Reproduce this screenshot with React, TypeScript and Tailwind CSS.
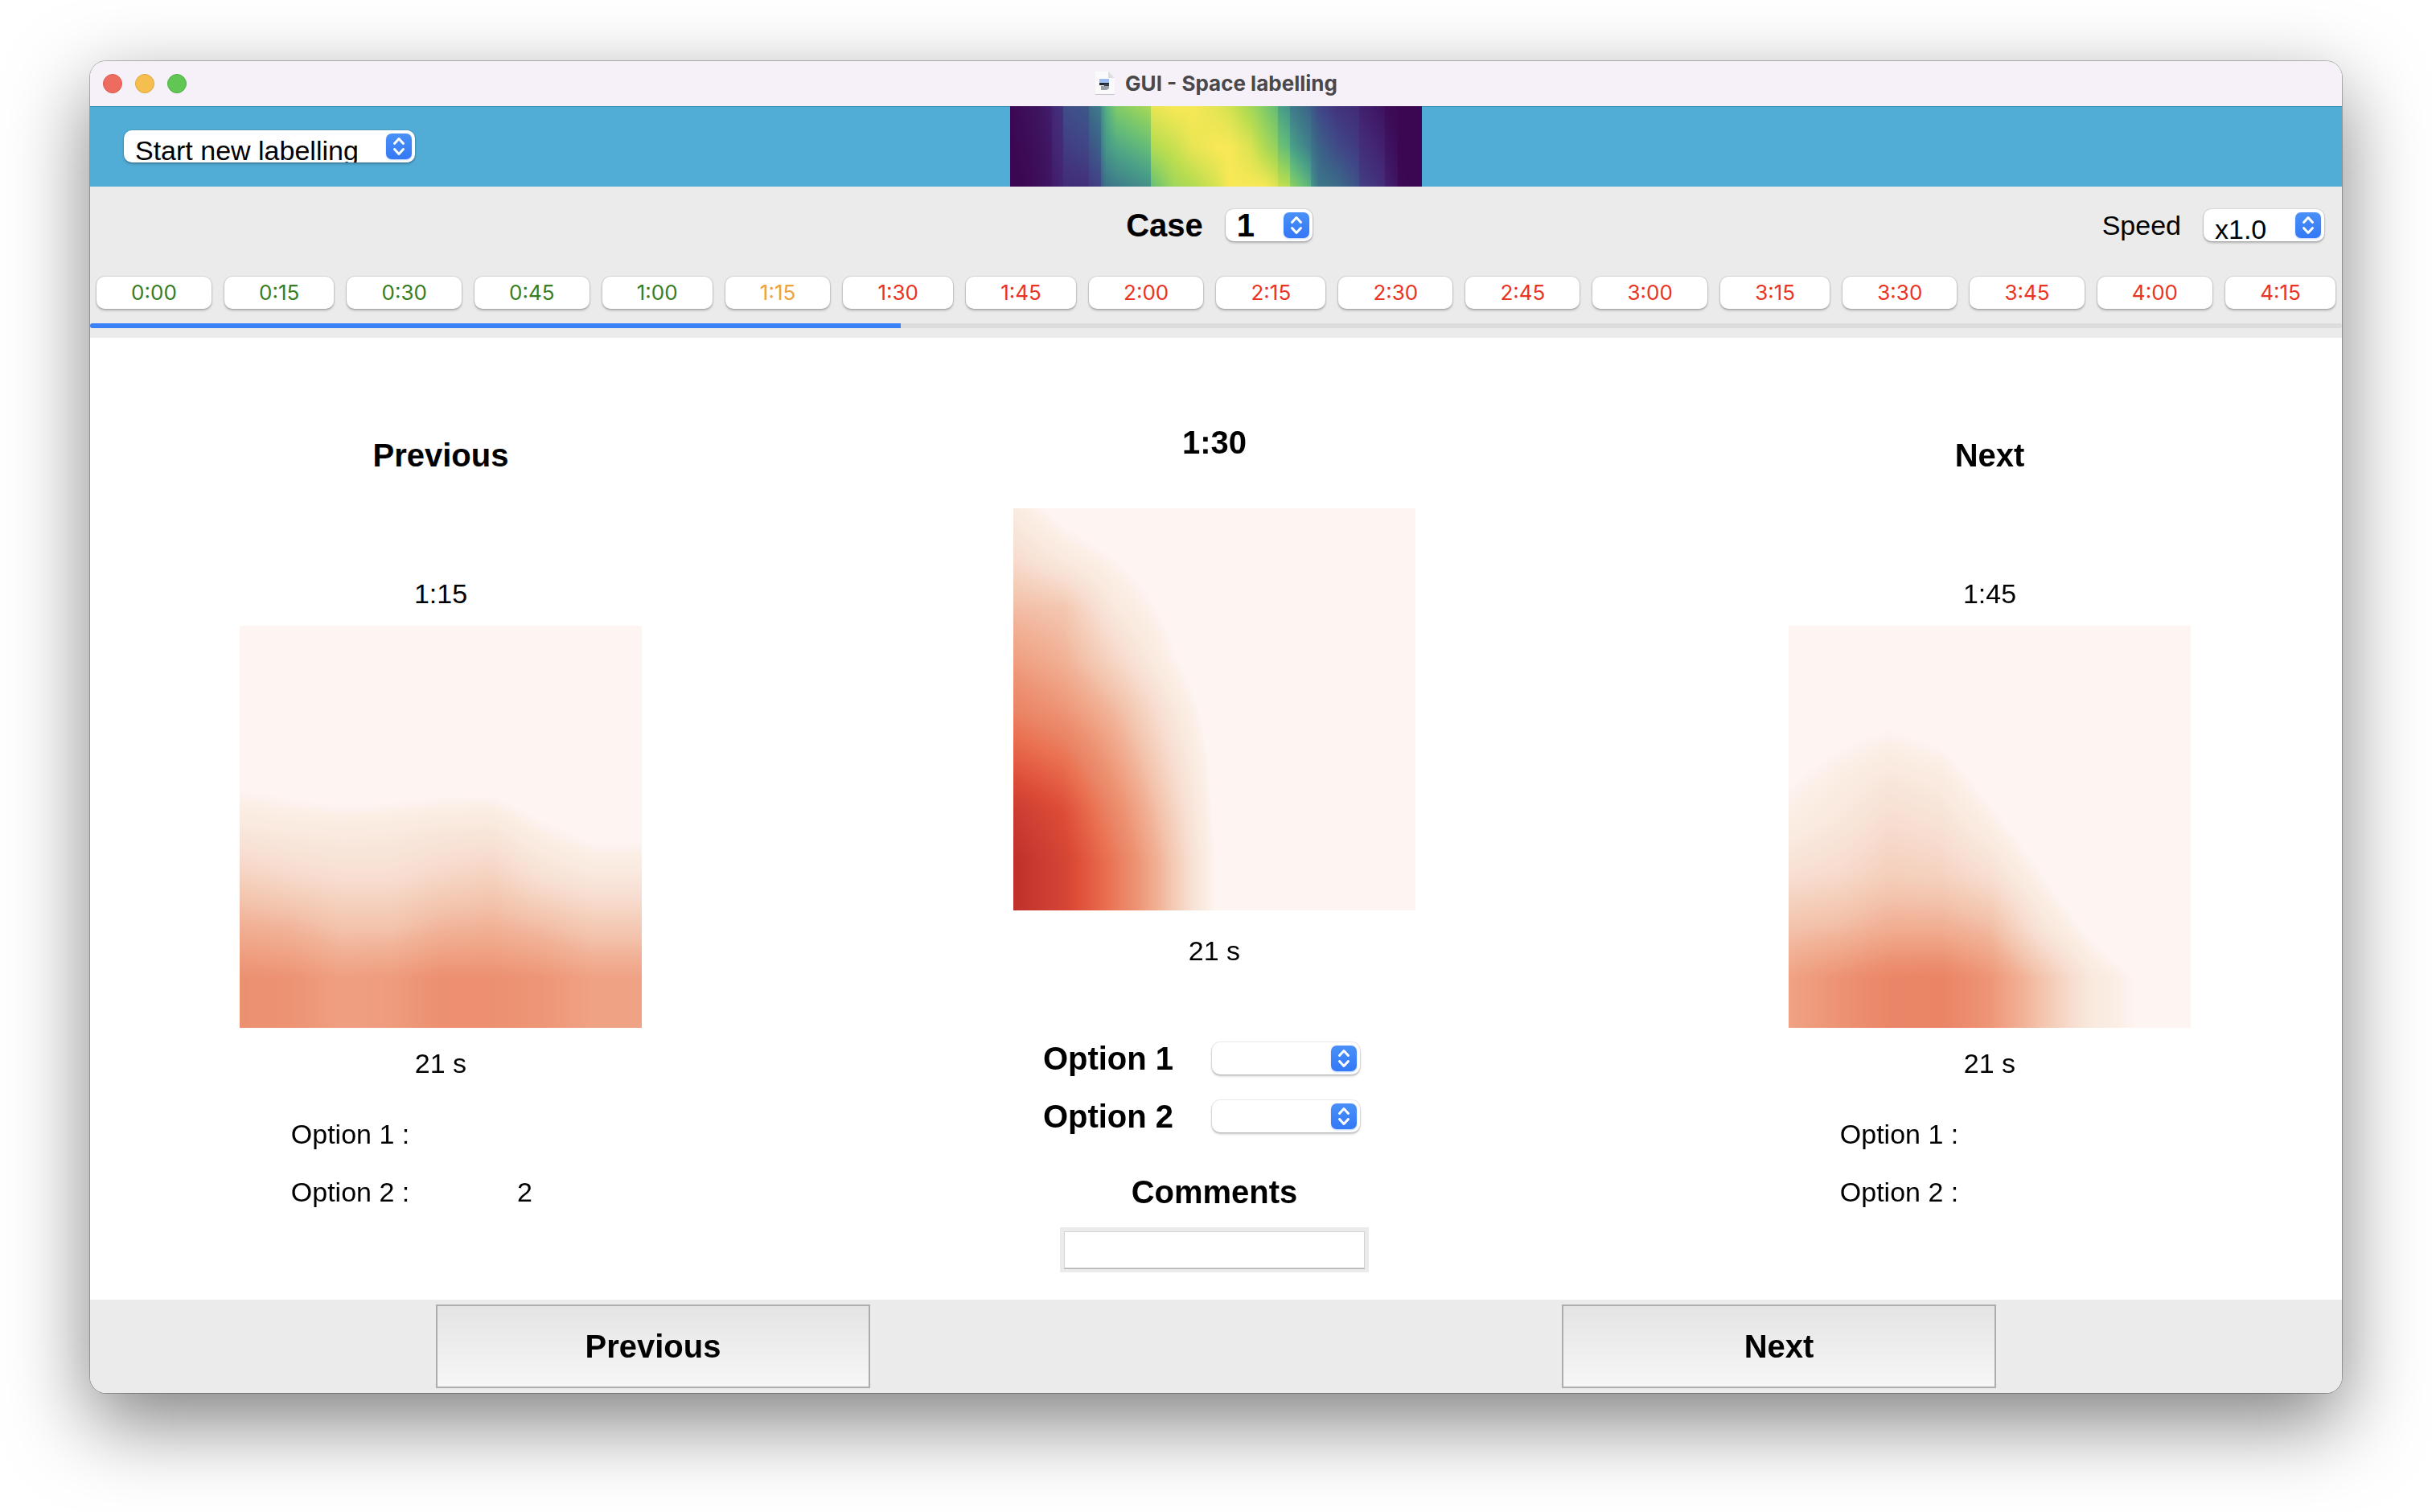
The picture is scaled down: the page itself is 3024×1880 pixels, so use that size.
import { useEffect, useRef, useState } from "react";

type RGB = [number, number, number];
type Stop = [number, RGB];

const hex = (h: string): RGB => [
  parseInt(h.slice(0, 2), 16),
  parseInt(h.slice(2, 4), 16),
  parseInt(h.slice(4, 6), 16),
];

const REDS: Stop[] = [
  [0, hex("fef4f1")],
  [0.012, hex("fcf1ed")],
  [0.03, hex("fbeee4")],
  [0.06, hex("faeadf")],
  [0.09, hex("f8e4d8")],
  [0.12, hex("f8ded2")],
  [0.17, hex("f5d1be")],
  [0.22, hex("f3c3ac")],
  [0.27, hex("f1b196")],
  [0.32, hex("f0a284")],
  [0.38, hex("ec9070")],
  [0.43, hex("ea8465")],
  [0.49, hex("ea7252")],
  [0.56, hex("e35c43")],
  [0.62, hex("dc4b36")],
  [0.7, hex("cd3d32")],
  [0.77, hex("bf302a")],
];

const VIRIDIS: Stop[] = [
  [0, hex("3b0652")],
  [0.11, hex("432775")],
  [0.22, hex("404787")],
  [0.33, hex("3b6588")],
  [0.44, hex("40818a")],
  [0.55, hex("4aa087")],
  [0.66, hex("65bc78")],
  [0.77, hex("8ccf62")],
  [0.88, hex("badd50")],
  [1, hex("f8e855")],
];

function colour(map: Stop[], v: number): RGB {
  if (v <= map[0][0]) return map[0][1];
  for (let i = 1; i < map.length; i++) {
    const [b, cb] = map[i];
    const [a, ca] = map[i - 1];
    if (v <= b) {
      const f = (v - a) / (b - a);
      return [0, 1, 2].map((k) => ca[k] + (cb[k] - ca[k]) * f) as RGB;
    }
  }
  return map[map.length - 1][1];
}

// Eight samples per axis, spaced an eighth apart; values below zero are blank.
const N = -0.1;
const PREVIOUS_MAP = [
  [N, N, N, N, N, N, N, N],
  [N, N, N, N, N, N, N, N],
  [N, N, N, N, N, N, N, N],
  [-0.022, -0.038, -0.06, -0.055, -0.043, -0.043, -0.09, N],
  [0.07, 0.055, 0.05, 0.055, 0.07, 0.075, 0.015, -0.03],
  [0.17, 0.14, 0.12, 0.12, 0.15, 0.17, 0.11, 0.075],
  [0.28, 0.26, 0.22, 0.22, 0.26, 0.27, 0.24, 0.2],
  [0.38, 0.37, 0.33, 0.34, 0.38, 0.38, 0.36, 0.32],
];
const CURRENT_MAP = [
  [0.05, -0.03, -0.08, N, N, N, N, N],
  [0.13, 0.06, 0.003, -0.05, N, N, N, N],
  [0.24, 0.21, 0.07, -0.01, N, N, N, N],
  [0.33, 0.27, 0.15, 0.03, -0.08, N, N, N],
  [0.43, 0.36, 0.25, 0.1, -0.045, N, N, N],
  [0.56, 0.49, 0.33, 0.15, -0.02, N, N, N],
  [0.71, 0.61, 0.41, 0.2, -0.01, N, N, N],
  [0.77, 0.66, 0.47, 0.24, 0, 0, 0, 0],
];
const NEXT_MAP = [
  [N, N, N, N, N, N, N, N],
  [N, N, N, N, N, N, N, N],
  [-0.06, -0.025, -0.003, -0.03, N, N, N, N],
  [-0.008, 0.035, 0.075, 0.05, -0.035, N, N, N],
  [0.04, 0.08, 0.13, 0.11, 0.035, -0.06, N, N],
  [0.12, 0.14, 0.18, 0.17, 0.12, 0.01, -0.1, N],
  [0.22, 0.24, 0.28, 0.28, 0.24, 0.09, -0.02, N],
  [0.32, 0.37, 0.42, 0.43, 0.36, 0.22, 0.07, -0.01],
];

function sampleGrid(grid: number[][], u: number, v: number) {
  const x = Math.min(u * 8, 7);
  const y = Math.min(v * 8, 7);
  const i = Math.min(Math.floor(x), 6);
  const j = Math.min(Math.floor(y), 6);
  const fx = x - i;
  const fy = y - j;
  const top = grid[j][i] * (1 - fx) + grid[j][i + 1] * fx;
  const bottom = grid[j + 1][i] * (1 - fx) + grid[j + 1][i + 1] * fx;
  return top * (1 - fy) + bottom * fy;
}

// [x, top, middle, bottom]; a repeated x makes a hard step.
const STRIP: number[][] = [
  [0, 0, 0, 0],
  [27, 0.02, 0.01, 0],
  [82, 0.04, 0.03, 0.02],
  [132, 0.08, 0.06, 0.05],
  [137, 0.11, 0.1, 0.07],
  [172, 0.15, 0.12, 0.1],
  [172, 0.24, 0.18, 0.12],
  [255, 0.28, 0.22, 0.14],
  [255, 0.36, 0.26, 0.17],
  [293, 0.42, 0.32, 0.2],
  [295, 0.49, 0.42, 0.3],
  [310, 0.6, 0.52, 0.38],
  [345, 0.74, 0.58, 0.42],
  [455, 0.84, 0.67, 0.5],
  [455, 0.97, 0.86, 0.66],
  [532, 1, 0.91, 0.82],
  [592, 1, 0.97, 0.86],
  [672, 0.96, 1, 0.94],
  [712, 0.93, 1, 1],
  [782, 0.83, 0.94, 1],
  [827, 0.74, 0.85, 1],
  [868, 0.65, 0.78, 0.95],
  [868, 0.56, 0.7, 0.91],
  [909, 0.5, 0.64, 0.88],
  [909, 0.42, 0.56, 0.78],
  [977, 0.32, 0.42, 0.62],
  [977, 0.3, 0.39, 0.52],
  [1002, 0.22, 0.32, 0.4],
  [1062, 0.15, 0.23, 0.36],
  [1132, 0.12, 0.17, 0.25],
  [1132, 0.09, 0.14, 0.2],
  [1217, 0.04, 0.08, 0.13],
  [1217, 0.02, 0.05, 0.09],
  [1257, 0.01, 0.02, 0.05],
  [1257, 0, 0, 0.01],
  [1338, 0, 0, 0],
];

function sampleStrip(u: number, v: number) {
  const x = u * 1338;
  let i = 0;
  while (i < STRIP.length - 2 && STRIP[i + 1][0] <= x) i++;
  const a = STRIP[i];
  const b = STRIP[i + 1];
  const f = (x - a[0]) / Math.max(b[0] - a[0], 1);
  const at = (k: number) => a[k] + (b[k] - a[k]) * f;
  return v < 0.5
    ? at(1) + (at(2) - at(1)) * v * 2
    : at(2) + (at(3) - at(2)) * (v * 2 - 1);
}

function Plot({
  width,
  height,
  map,
  sample,
  label,
  className,
}: {
  width: number;
  height: number;
  map: Stop[];
  sample: (u: number, v: number) => number;
  label: string;
  className: string;
}) {
  const ref = useRef<HTMLCanvasElement>(null);
  useEffect(() => {
    const ctx = ref.current?.getContext("2d");
    if (!ctx) return;
    const image = ctx.createImageData(width, height);
    for (let y = 0; y < height; y++) {
      for (let x = 0; x < width; x++) {
        const c = colour(map, sample(x / width, y / height));
        const o = (y * width + x) * 4;
        image.data[o] = c[0];
        image.data[o + 1] = c[1];
        image.data[o + 2] = c[2];
        image.data[o + 3] = 255;
      }
    }
    ctx.putImageData(image, 0, 0);
  }, [width, height, map, sample]);
  return (
    <canvas ref={ref} width={width} height={height} role="img" aria-label={label} className={className} />
  );
}

const samplePrevious = (u: number, v: number) => sampleGrid(PREVIOUS_MAP, u, v);
const sampleCurrent = (u: number, v: number) => sampleGrid(CURRENT_MAP, u, v);
const sampleNext = (u: number, v: number) => sampleGrid(NEXT_MAP, u, v);

function Heatmap({ sample, label }: { sample: (u: number, v: number) => number; label: string }) {
  return (
    <Plot width={500} height={500} map={REDS} sample={sample} label={label} className="block size-[500px]" />
  );
}

function PopUp({
  id,
  label,
  options,
  className,
}: {
  id: string;
  label?: string;
  options: string[];
  className: string;
}) {
  return (
    <div className="relative">
      <select
        id={id}
        aria-label={label}
        className={`block h-10 appearance-none rounded-[10px] bg-white pl-3.5 pr-10 text-black shadow-[0_0_0_1px_rgba(0,0,0,0.08),0_2px_3px_rgba(0,0,0,0.25)] outline-none ${className}`}
      >
        {options.map((o) => (
          <option key={o}>{o}</option>
        ))}
      </select>
      <span className="pointer-events-none absolute top-1 right-1 size-8 rounded-[7px] bg-linear-to-b from-[#4a90f7] to-[#3478f6] shadow-[0_1px_2px_rgba(52,120,246,0.35)]">
        <svg viewBox="0 0 32 32" className="size-8" fill="none" stroke="white" strokeWidth="3" strokeLinecap="round" strokeLinejoin="round">
          <path d="M10.5 12.5 16 6.5l5.5 6M10.5 19.5l5.5 6 5.5-6" />
        </svg>
      </span>
    </div>
  );
}

function DocumentIcon() {
  return (
    <svg viewBox="0 0 26 30" className="h-[30px] w-[26px]" aria-hidden="true">
      <path d="M1 1h16l8 8v20H1z" fill="#c9c7cb" />
      <path d="M1 0h16l8 8v20H1z" fill="#fafafa" />
      <path d="M17 0v8h8z" fill="#dddcde" />
      <rect x="6" y="9" width="12" height="8" fill="#9dbcf0" />
      <rect x="6" y="14" width="12" height="3" fill="#1c2536" />
      <path d="M8 18h10v3l-3 2H8z" fill="#9aa0a8" />
      <path d="M12 15h6v3h-6z" fill="#3b414b" />
    </svg>
  );
}

const TIMES = [
  "0:00", "0:15", "0:30", "0:45", "1:00", "1:15", "1:30", "1:45", "2:00",
  "2:15", "2:30", "2:45", "3:00", "3:15", "3:30", "3:45", "4:00", "4:15",
];
const LABELLED = 5;

function timeColour(i: number) {
  if (i < LABELLED) return "text-[#377d22]";
  return i === LABELLED ? "text-[#f0a23a]" : "text-[#ea3323]";
}

function Neighbour({
  title,
  time,
  sample,
  options,
}: {
  title: string;
  time: string;
  sample: (u: number, v: number) => number;
  options: [string, string][];
}) {
  return (
    <section className="flex flex-col items-center pt-[122px]">
      <h2 className="text-[40px] leading-12 font-bold">{title}</h2>
      <p className="mt-32 leading-10">{time}</p>
      <div className="mt-5">
        <Heatmap sample={sample} label={`Heat map at ${time}`} />
      </div>
      <p className="mt-6 leading-10">21 s</p>
      <dl className="mt-12 mr-2 grid w-[434px] grid-cols-2 gap-y-8 text-center leading-10">
        {options.map(([name, value]) => (
          <div key={name} className="contents">
            <dt>{name}</dt>
            <dd>{value}</dd>
          </div>
        ))}
      </dl>
    </section>
  );
}

export default function App() {
  const [comment, setComment] = useState("");
  return (
    <div className="min-h-screen bg-white px-28 pt-[76px] pb-[148px] font-['Liberation_Sans',Arial,sans-serif] text-[34px] text-black">
      <main className="overflow-hidden rounded-[20px] bg-white shadow-[0_0_0_1px_rgba(0,0,0,0.25),0_36px_100px_rgba(0,0,0,0.5)]">
        <header className="grid h-14 grid-cols-[1fr_auto_1fr] items-center bg-[#f6f1f8] px-4">
          <div className="flex gap-4">
            <button aria-label="Close" className="size-6 rounded-full border border-[#d9584c] bg-[#ed6b5f]" />
            <button aria-label="Minimise" className="size-6 rounded-full border border-[#dda63c] bg-[#f5bf4f]" />
            <button aria-label="Zoom" className="size-6 rounded-full border border-[#50ae43] bg-[#62c655]" />
          </div>
          <div className="flex items-center gap-3">
            <DocumentIcon />
            <h1 className="font-['Inter',sans-serif] text-[26px] leading-8 font-bold text-[#4a484b]">
              GUI - Space labelling
            </h1>
          </div>
        </header>

        <div className="grid h-[100px] grid-cols-[1fr_auto_1fr] items-center bg-[#51acd6] shadow-[inset_0_1px_0_#2c86af]">
          <div className="flex pl-[42px]">
            <PopUp id="mode" label="Labelling session" options={["Start new labelling"]} className="w-[362px]" />
          </div>
          <Plot width={512} height={100} map={VIRIDIS} sample={sampleStrip} label="Case overview" className="block h-[100px] w-[512px]" />
        </div>

        <div className="bg-[#ebebeb] pt-7 pb-3">
          <div className="grid grid-cols-[1fr_auto_1fr] items-center">
            <div className="col-start-2 flex items-center gap-7 pl-2 text-[40px] leading-10 font-bold">
              <label htmlFor="case">Case</label>
              <PopUp id="case" options={["1"]} className="w-[108px]" />
            </div>
            <div className="flex items-center justify-end gap-7 pr-[22px]">
              <label htmlFor="speed" className="leading-10">Speed</label>
              <PopUp id="speed" options={["x1.0"]} className="w-[150px]" />
            </div>
          </div>
          <nav className="mt-11 flex gap-4 px-2 font-['Inter',sans-serif] text-[26px]">
            {TIMES.map((t, i) => (
              <button
                key={t}
                className={`h-10 flex-auto rounded-[10px] bg-white leading-9 shadow-[0_0_0_1px_rgba(0,0,0,0.08),0_2px_3px_rgba(0,0,0,0.25)] ${timeColour(i)}`}
              >
                {t}
              </button>
            ))}
          </nav>
          <div
            role="progressbar"
            aria-label="Progress"
            aria-valuenow={36}
            aria-valuemin={0}
            aria-valuemax={100}
            className="mt-[18px] h-1.5 rounded-full bg-[#dcdcdc]"
          >
            <div className="h-full w-[36%] rounded-l-full bg-[#3a80f6]" />
          </div>
        </div>

        <div className="grid grid-cols-[872fr_1052fr_876fr]">
          <Neighbour
            title="Previous"
            time="1:15"
            sample={samplePrevious}
            options={[["Option 1 :", ""], ["Option 2 :", "2"]]}
          />
          <section className="flex flex-col items-center pt-[106px] pb-[34px]">
            <h2 className="text-[40px] leading-12 font-bold">1:30</h2>
            <div className="mt-[58px]">
              <Heatmap sample={sampleCurrent} label="Heat map at 1:30" />
            </div>
            <p className="mt-[30px] leading-10">21 s</p>
            <div className="mt-[94px] mr-8 grid grid-cols-[auto_auto] items-center gap-x-12 gap-y-8 text-[40px] leading-10 font-bold">
              <label htmlFor="option-1">Option 1</label>
              <PopUp id="option-1" options={["", "1", "2"]} className="w-46" />
              <label htmlFor="option-2">Option 2</label>
              <PopUp id="option-2" options={["", "1", "2"]} className="w-46" />
            </div>
            <label htmlFor="comments" className="mt-[50px] text-[40px] leading-12 font-bold">
              Comments
            </label>
            <div className="mt-5 w-96 bg-[#ebebeb] p-1.5">
              <input
                id="comments"
                value={comment}
                onChange={(e) => setComment(e.target.value)}
                className="block h-11 w-full bg-white px-2 text-[26px] shadow-[0_0_0_1px_#d4d4d4,0_1px_0_1px_#b4b4b4] outline-none"
              />
            </div>
          </section>
          <Neighbour
            title="Next"
            time="1:45"
            sample={sampleNext}
            options={[["Option 1 :", ""], ["Option 2 :", ""]]}
          />
        </div>

        <footer className="grid grid-cols-2 justify-items-center bg-[#ebebeb] py-1.5 text-[40px] font-bold">
          <button className="h-[104px] w-[540px] border-2 border-[#adadad] bg-linear-to-b from-[#e4e4e4] to-[#f7f7f7]">
            Previous
          </button>
          <button className="h-[104px] w-[540px] border-2 border-[#adadad] bg-linear-to-b from-[#e4e4e4] to-[#f7f7f7]">
            Next
          </button>
        </footer>
      </main>
    </div>
  );
}
